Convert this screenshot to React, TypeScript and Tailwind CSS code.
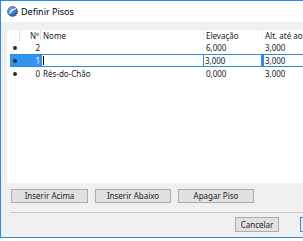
const font = { fontFamily: '"Noto Sans", "Open Sans", sans-serif' };

const rows = [
  { num: "2", name: "", elev: "6,000", alt: "3,000" },
  { num: "1", name: "", elev: "3,000", alt: "3,000", selected: true },
  { num: "0", name: "Rés-do-Chão", elev: "0,000", alt: "3,000" },
];

const Dot = () => (
  <span className="block w-[4px] h-[4px] rounded-full bg-[#2b2b2b]" />
);

const Logo = () => (
  <svg width="11" height="11" viewBox="0 0 11 11">
    <defs>
      <radialGradient id="lg" cx="35%" cy="30%" r="75%">
        <stop offset="0" stopColor="#7fb2ee" />
        <stop offset="1" stopColor="#1b4fa3" />
      </radialGradient>
    </defs>
    <circle cx="5.5" cy="5.5" r="5" fill="url(#lg)" stroke="#3a5f93" strokeWidth="0.6" />
    <path d="M2.2 7.8 C 4 4.8, 6 3.2, 8.8 2.6" stroke="#fff" strokeWidth="1.1" fill="none" />
  </svg>
);

const Btn = ({ label, w }: { label: string; w: string }) => (
  <div
    className={`${w} shrink-0 h-[14px] border border-[#adadad] bg-[#e1e1e1] flex items-center justify-center text-[8px] text-[#222]`}
  >
    {label}
  </div>
);

const App = () => {
  return (
    <div className="w-[303px] h-[241px] bg-white overflow-hidden" style={font}>
      <div className="w-[330px] h-[238px] border-l border-t border-b border-[#2c8be6] flex flex-col">
        {/* title bar */}
        <div className="h-[21px] bg-white flex items-center pl-[6px] gap-[3px]">
          <Logo />
          <span className="text-[9px] text-black leading-none">Definir Pisos</span>
        </div>

        <div className="flex-1 bg-[#f0f0f0] flex flex-col pt-[8px] pl-[6px]">
          {/* table */}
          <div className="h-[153px] bg-white text-[8px] text-[#1a1a1a] leading-none">
            <div className="h-[11px] flex items-center whitespace-nowrap">
              <div className="w-[13px] shrink-0 h-full border-r border-[#e3e3e3]" />
              <div className="w-[21px] shrink-0 h-full border-r border-[#e3e3e3] flex items-center justify-end pr-[1px]">
                Nº
              </div>
              <div className="w-[163px] shrink-0 h-full border-r border-[#f0f0f0] flex items-center pl-[2px]">
                Nome
              </div>
              <div className="w-[59px] shrink-0 h-full border-r border-[#f0f0f0] flex items-center pl-[2px]">
                Elevação
              </div>
              <div className="flex-1 min-w-0 overflow-hidden h-full flex items-center pl-[2px]">
                Alt. até ao solo seguinte
              </div>
            </div>

            {rows.map((r) =>
              r.selected ? (
                <div key={r.num} className="h-[13px] flex pl-[3px] whitespace-nowrap">
                  <div className="w-[31px] shrink-0 bg-[#3393f0] border-y border-[#2c8be6] flex items-center">
                    <div className="w-[10px] flex justify-center">
                      <Dot />
                    </div>
                    <div className="flex-1 text-right pr-[1px] text-white">{r.num}</div>
                  </div>
                  <div className="w-[163px] shrink-0 border border-[#2c8be6] flex items-center pl-[1px]">
                    <span className="block w-[1px] h-[9px] bg-black" />
                  </div>
                  <div className="w-[59px] shrink-0 border-y border-r-2 border-[#2c8be6] flex items-center pl-[1px]">
                    {r.elev}
                  </div>
                  <div className="flex-1 min-w-0 border border-[#2c8be6] flex items-center pl-[1px]">
                    {r.alt}
                  </div>
                </div>
              ) : (
                <div key={r.num} className="h-[13px] flex items-center whitespace-nowrap">
                  <div className="w-[13px] shrink-0 flex justify-center pl-[3px]">
                    <Dot />
                  </div>
                  <div className="w-[21px] shrink-0 text-right pr-[1px]">{r.num}</div>
                  <div className="w-[163px] shrink-0 pl-[2px]">{r.name}</div>
                  <div className="w-[59px] shrink-0 pl-[2px]">{r.elev}</div>
                  <div className="flex-1 min-w-0 pl-[2px]">{r.alt}</div>
                </div>
              )
            )}
          </div>

          {/* action buttons */}
          <div className="flex gap-[7px] pl-[4px] mt-[6px]">
            <Btn label="Inserir Acima" w="w-[77px]" />
            <Btn label="Inserir Abaixo" w="w-[76px]" />
            <Btn label="Apagar Piso" w="w-[76px]" />
          </div>

          <div className="ml-[3px] mt-[9px] h-px bg-[#c8c8c8]" />

          <div className="flex gap-[21px] pl-[228px] mt-[4px]">
            <div className="w-[44px] shrink-0 h-[15px] border border-[#adadad] bg-[#e1e1e1] flex items-center justify-center text-[8px] text-[#222]">
              Cancelar
            </div>
            <div className="w-[44px] shrink-0 h-[15px] border border-[#2c8be6] bg-[#e5f1fb] flex items-center justify-center text-[8px] text-[#222]">
              OK
            </div>
          </div>
        </div>
      </div>
    </div>
  );
};

export default App;
